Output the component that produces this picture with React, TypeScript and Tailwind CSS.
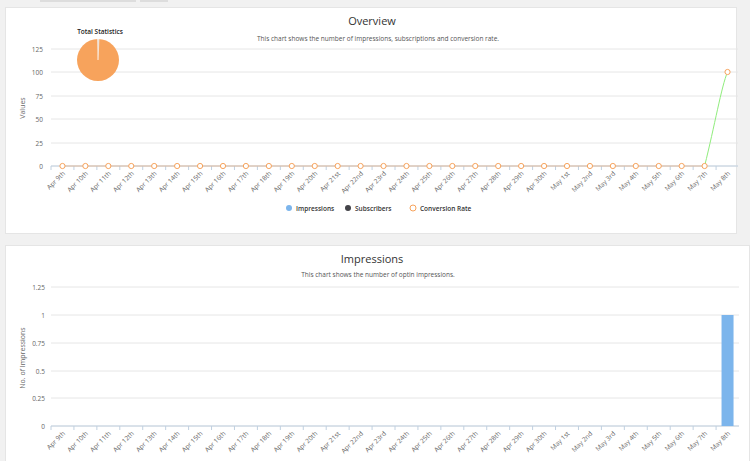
import React from "react";

const dates: string[] = [];
for (let d = 9; d <= 30; d++) dates.push(`Apr ${d}th`.replace("21th","21st").replace("22th","22nd").replace("23th","23rd"));
for (let d = 1; d <= 8; d++) dates.push(`May ${d}${d===1?"st":d===2?"nd":d===3?"rd":"th"}`);

const X0 = 45, X1 = 733;
const cw = (X1 - X0) / 30;
const cx = (i: number) => X0 + cw * (i + 0.5);
const F = "'Open Sans', 'Noto Sans', sans-serif";

function XLabels({ y }: { y: number }) {
  return (
    <g fontSize="6.5" fill="#666" fontFamily={F}>
      {dates.map((d, i) => (
        <g key={i}>
          <line x1={X0 + cw * i} x2={X0 + cw * i} y1={y} y2={y + 4} stroke="#c0d0e0" />
          <text x={cx(i) + 3} y={y + 8} textAnchor="end" transform={`rotate(-45 ${cx(i) + 3} ${y + 8})`}>{d}</text>
        </g>
      ))}
    </g>
  );
}

function Overview() {
  const ys = [[125, 41], [100, 64], [75, 88], [50, 111], [25, 135], [0, 158]];
  const base = 158;
  return (
    <svg width="732" height="226" className="block">
      <text x="366" y="17" textAnchor="middle" fontSize="11" fill="#333" fontFamily={F}>Overview</text>
      <text x="372" y="33" textAnchor="middle" fontSize="6.5" fill="#555" fontFamily={F}>This chart shows the number of impressions, subscriptions and conversion rate.</text>
      {ys.map(([v, y]) => (
        <g key={v}>
          <line x1={X0} x2={X1} y1={y} y2={y} stroke="#e6e6e6" />
          <text x="37" y={y + 2.5} textAnchor="end" fontSize="6.5" fill="#666" fontFamily={F}>{v}</text>
        </g>
      ))}
      <text x="19" y="100" textAnchor="middle" fontSize="7" fill="#666" fontFamily={F} transform="rotate(-90 19 100)">Values</text>
      <line x1={X0} x2={X1} y1={base} y2={base} stroke="#c0d0e0" />
      <XLabels y={base} />
      <path d={`M${cx(28)} ${base} C ${cx(28) + 10} ${base - 40}, ${cx(29) - 6} ${base - 80}, ${cx(29)} 64`} stroke="#90ed7d" fill="none" strokeWidth="1" />
      <line x1={cx(0)} x2={cx(28)} y1={base} y2={base} stroke="#f7a35c" strokeWidth="0.5" />
      {dates.map((_, i) => (
        <circle key={i} cx={cx(i)} cy={i === 29 ? 64 : base} r="2.6" fill="#fff" stroke="#f7a35c" strokeWidth="1" />
      ))}
      <text x="94" y="26" textAnchor="middle" fontSize="6.5" fill="#222" fontFamily={F} fontWeight="600">Total Statistics</text>
      <circle cx="92" cy="52" r="21" fill="#f7a35c" />
      <path d="M92 52 L91.5 31 L93 31 Z" fill="#ddd" stroke="#fff" strokeWidth="0.5" />
      <g fontSize="6.5" fill="#333" fontFamily={F} fontWeight="600">
        <circle cx="283" cy="200" r="3" fill="#7cb5ec" />
        <text x="290" y="202.5">Impressions</text>
        <circle cx="342" cy="200" r="3" fill="#434348" />
        <text x="349" y="202.5">Subscribers</text>
        <circle cx="407" cy="200" r="3" fill="#fff" stroke="#f7a35c" />
        <text x="414" y="202.5">Conversion Rate</text>
      </g>
    </svg>
  );
}

function Impressions() {
  const ys: [string, number][] = [["1.25", 41], ["1", 69], ["0.75", 97], ["0.5", 125], ["0.25", 152], ["0", 180]];
  const base = 180;
  return (
    <svg width="745" height="216" className="block">
      <text x="366" y="17" textAnchor="middle" fontSize="11" fill="#333" fontFamily={F}>Impressions</text>
      <text x="372" y="31" textAnchor="middle" fontSize="6.5" fill="#555" fontFamily={F}>This chart shows the number of optin impressions.</text>
      {ys.map(([v, y]) => (
        <g key={v}>
          <line x1={X0} x2={X1} y1={y} y2={y} stroke="#e6e6e6" />
          <text x="39" y={y + 2.5} textAnchor="end" fontSize="6.5" fill="#666" fontFamily={F}>{v}</text>
        </g>
      ))}
      <text x="19" y="112" textAnchor="middle" fontSize="7" fill="#666" fontFamily={F} transform="rotate(-90 19 112)">No. of Impressions</text>
      <line x1={X0} x2={X1} y1={base} y2={base} stroke="#c0d0e0" />
      <XLabels y={base} />
      <rect x={cx(29) - 6} y="69" width="12" height={base - 69} fill="#7cb5ec" />
    </svg>
  );
}

export default function App() {
  return (
    <div className="w-[750px] h-[461px] overflow-hidden bg-[#f1f1f1]">
      <div className="flex gap-1 h-[2px] ml-[40px]">
        <div className="w-[96px] bg-[#ddd]" />
        <div className="w-[28px] bg-[#ddd]" />
      </div>
      <div className="ml-[5px] mt-[5px] w-[732px] h-[227px] bg-white border border-[#e5e5e5]">
        <Overview />
      </div>
      <div className="ml-[5px] mt-[11px] w-[745px] h-[230px] bg-white border border-[#e5e5e5]">
        <Impressions />
      </div>
    </div>
  );
}
